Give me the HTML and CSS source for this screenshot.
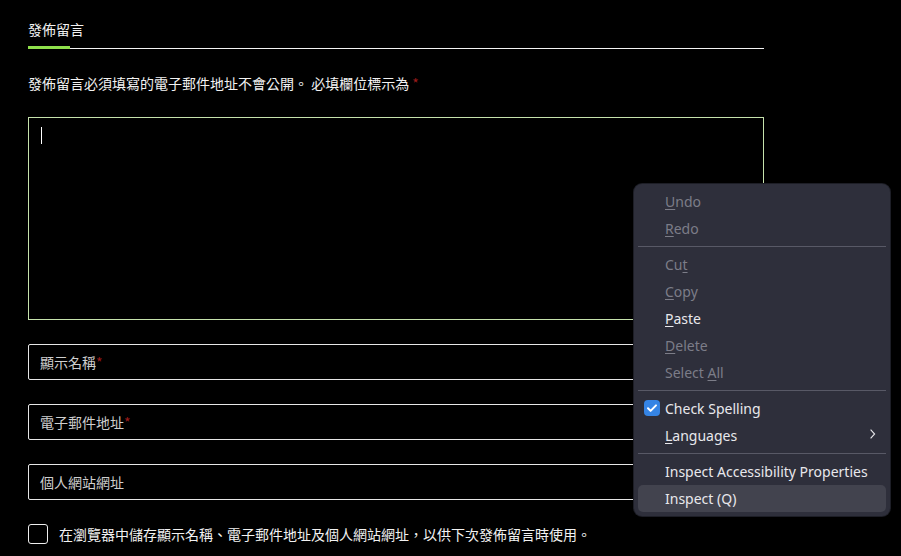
FILE: index.html
```html
<!DOCTYPE html>
<html lang="zh-Hant">
<head>
<meta charset="utf-8">
<link rel="stylesheet" href="styles.css">
</head>
<body>
<div class="page">
  <div class="tabbar"><div class="tab">發佈留言</div></div>
  <p class="notes">發佈留言必須填寫的電子郵件地址不會公開。 必填欄位標示為 <span class="req">*</span></p>
  <div class="textarea"><span class="caret"></span></div>
  <div class="field">顯示名稱<span class="req">*</span></div>
  <div class="field">電子郵件地址<span class="req">*</span></div>
  <div class="field">個人網站網址</div>
  <div class="consent"><span class="box"></span><span>在瀏覽器中儲存顯示名稱、電子郵件地址及個人網站網址，以供下次發佈留言時使用。</span></div>
</div>

<div class="menu">
  <div class="item off"><u>U</u>ndo</div>
  <div class="item off"><u>R</u>edo</div>
  <div class="sep"></div>
  <div class="item off">Cu<u>t</u></div>
  <div class="item off"><u>C</u>opy</div>
  <div class="item"><u>P</u>aste</div>
  <div class="item off"><u>D</u>elete</div>
  <div class="item off">Select <u>A</u>ll</div>
  <div class="sep"></div>
  <div class="item"><span class="check"><svg viewBox="0 0 16 16" width="16" height="16"><rect x="0" y="0" width="16" height="16" rx="4" fill="#3584e4"/><path d="M4 8.3l2.6 2.6L12 5.4" fill="none" stroke="#fff" stroke-width="2" stroke-linecap="round" stroke-linejoin="round"/></svg></span>Check Spelling</div>
  <div class="item"><u>L</u>anguages<span class="chev"><svg viewBox="0 0 10 14" width="8" height="12"><path d="M2 1.5l5 5.5-5 5.5" fill="none" stroke="#e6e6ea" stroke-width="1.4"/></svg></span></div>
  <div class="sep"></div>
  <div class="item">Inspect Accessibility Properties</div>
  <div class="item hl">Inspect (Q)</div>
</div>
</body>
</html>
```

FILE: styles.css
```css
html, body {
  margin: 0;
  padding: 0;
  background: #000;
}
body {
  width: 901px;
  height: 556px;
  overflow: hidden;
  position: relative;
  font-family: "Noto Sans CJK TC", "Noto Sans", sans-serif;
  color: #f2f2f2;
  font-size: 14px;
}
.page {
  width: 736px;
  padding: 0 0 0 28px;
}
.tabbar {
  display: flex;
  border-bottom: 1px solid #f4f4f4;
}
.tab {
  position: relative;
  padding: 19px 0 10px;
  line-height: 20px;
  margin-bottom: -1px;
  font-size: 14px;
}
.tab::after {
  content: "";
  position: absolute;
  left: 0;
  bottom: 0;
  width: 42px;
  height: 3px;
  background: #8fe04b;
}
.notes {
  margin: 24px 0 0;
  line-height: 20px;
  height: 20px;
}
.req {
  color: #9b1b1b;
}
.textarea {
  margin-top: 24px;
  height: 203px;
  border: 1px solid #c6e2ad;
  box-sizing: border-box;
  padding: 9px 12px;
}
.caret {
  display: block;
  width: 1px;
  height: 17px;
  background: #fff;
}
.field {
  margin-top: 24px;
  height: 36px;
  box-sizing: border-box;
  border: 1px solid #e6e6e6;
  border-radius: 2px;
  padding: 0 11px;
  display: flex;
  align-items: center;
  color: #cfcfcf;
}
.consent {
  margin-top: 24px;
  display: flex;
  align-items: center;
  gap: 11px;
  line-height: 20px;
}
.box {
  width: 20px;
  height: 20px;
  box-sizing: border-box;
  border: 1px solid #eee;
  border-radius: 3px;
  flex: none;
}
.menu {
  position: absolute;
  left: 634px;
  top: 184px;
  width: 256px;
  box-sizing: border-box;
  background: #2e2f3b;
  border-radius: 8px;
  padding: 4px 4px;
  font-family: "Noto Sans", sans-serif;
  font-size: 14px;
  color: #e8e8ec;
  box-shadow: 0 0 0 1px #1d1e26;
}
.item {
  position: relative;
  height: 27px;
  line-height: 27px;
  padding-left: 27px;
  border-radius: 5px;
}
.item u {
  text-decoration-thickness: 1px;
  text-underline-offset: 2px;
}
.off {
  color: #7c7d88;
}
.hl {
  background: #42434e;
}
.sep {
  height: 1px;
  background: #585966;
  margin: 4px 0 4px;
}
.check {
  position: absolute;
  left: 6px;
  top: 5px;
  width: 16px;
  height: 16px;
  line-height: 0;
}
.chev {
  position: absolute;
  right: 9px;
  top: 6px;
  line-height: 0;
}
```
